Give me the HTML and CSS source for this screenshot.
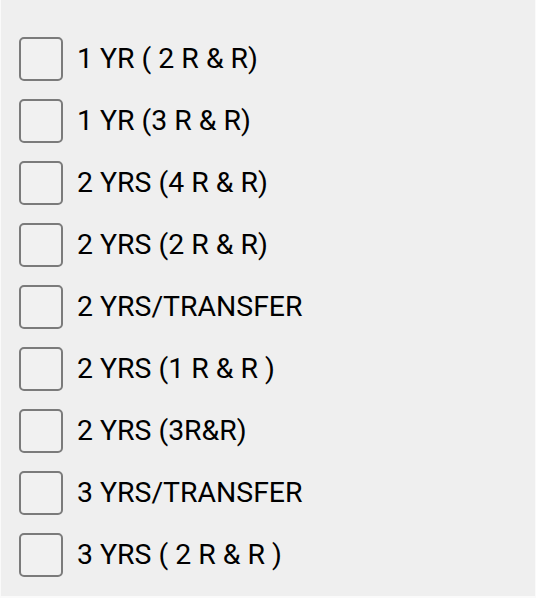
FILE: index.html
```html
<!DOCTYPE html>
<html>
<head>
<meta charset="utf-8">
<link rel="stylesheet" href="styles.css">
</head>
<body>
<div class="panel">
  <ul class="options">
    <li class="option"><span class="box"></span><span class="label">1 YR ( 2 R &amp; R)</span></li>
    <li class="option"><span class="box"></span><span class="label">1 YR (3 R &amp; R)</span></li>
    <li class="option"><span class="box"></span><span class="label">2 YRS (4 R &amp; R)</span></li>
    <li class="option"><span class="box"></span><span class="label">2 YRS (2 R &amp; R)</span></li>
    <li class="option"><span class="box"></span><span class="label">2 YRS/TRANSFER</span></li>
    <li class="option"><span class="box"></span><span class="label">2 YRS (1 R &amp; R )</span></li>
    <li class="option"><span class="box"></span><span class="label">2 YRS (3R&amp;R)</span></li>
    <li class="option"><span class="box"></span><span class="label">3 YRS/TRANSFER</span></li>
    <li class="option"><span class="box"></span><span class="label">3 YRS ( 2 R &amp; R )</span></li>
  </ul>
</div>
</body>
</html>
```

FILE: styles.css
```css
html, body {
  margin: 0;
  padding: 0;
  background: #fafafa;
}
body {
  width: 536px;
  height: 598px;
  padding-left: 1px;
  box-sizing: border-box;
}
.panel {
  width: 534px;
  height: 596px;
  background: #efefef;
  box-sizing: border-box;
  padding: 37px 0 0 18px;
}
.options {
  list-style: none;
  margin: 0;
  padding: 0;
  display: flex;
  flex-direction: column;
  gap: 18px;
}
.option {
  display: flex;
  align-items: center;
  height: 44px;
  gap: 14px;
}
.box {
  width: 44px;
  height: 44px;
  box-sizing: border-box;
  border: 2px solid #7b7b7b;
  border-radius: 5px;
  background: #f1f1f1;
  flex: none;
}
.label {
  font-family: Roboto, "Liberation Sans", sans-serif;
  font-size: 28.4px;
  color: #000;
  white-space: pre;
  line-height: 1;
}
```
